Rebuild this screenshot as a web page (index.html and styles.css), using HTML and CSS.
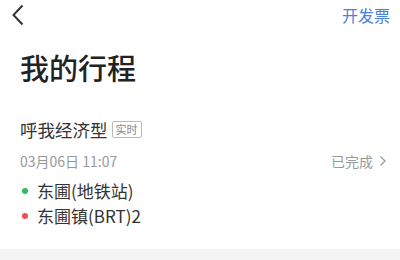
FILE: index.html
```html
<!DOCTYPE html>
<html lang="zh">
<head>
<meta charset="utf-8">
<link rel="stylesheet" href="styles.css">
</head>
<body>
<div class="page">
  <div class="nav">
    <svg class="back" width="14" height="22" viewBox="0 0 14 22"><path d="M11.5 1.5 L2.5 11 L11.5 20.5" fill="none" stroke="#333" stroke-width="2"/></svg>
    <span class="invoice">开发票</span>
  </div>
  <h1 class="title">我的行程</h1>
  <div class="card">
    <div class="type-row">
      <span class="type">呼我经济型</span>
      <span class="tag">实时</span>
    </div>
    <div class="meta-row">
      <span class="date">03月06日 11:07</span>
      <span class="status">已完成
        <svg width="8" height="12" viewBox="0 0 8 12"><path d="M1.5 1.5 L6 6 L1.5 10.5" fill="none" stroke="#999" stroke-width="1.3"/></svg>
      </span>
    </div>
    <div class="stops">
      <div class="stop"><span class="dot green"></span><span>东圃(地铁站)</span></div>
      <div class="stop"><span class="dot red"></span><span>东圃镇(BRT)2</span></div>
    </div>
  </div>
  <div class="band"></div>
</div>
</body>
</html>
```
FILE: styles.css
```css
* { box-sizing: border-box; }
html, body { margin: 0; padding: 0; background: #fff; }
body { font-family: "Noto Sans CJK SC", "Noto Sans", sans-serif; color: #333; }
.page { width: 400px; height: 260px; overflow: hidden; display: flex; flex-direction: column; }
.nav { height: 30px; display: flex; align-items: center; justify-content: space-between; padding: 0 10px 0 11px; }
.back { display: block; }
.invoice { font-size: 16px; color: #4a80e0; line-height: 30px; }
.title { margin: 17px 0 0 20px; font-size: 29px; font-weight: 500; color: #222; line-height: 40px; }
.card { padding: 0 13px 0 20px; margin-top: 30px; }
.type-row { display: flex; align-items: center; height: 24px; }
.type { font-size: 17.5px; color: #333; }
.tag { margin-left: 4px; font-size: 11px; color: #888; border: 1px solid #bbb; border-radius: 2px; line-height: 13px; padding: 1px 3px; }
.meta-row { display: flex; justify-content: space-between; align-items: center; margin-top: 9px; height: 22px; font-size: 14px; color: #999; }
.status { display: flex; align-items: center; gap: 6px; }
.stops { margin-top: 6px; }
.stop { display: flex; align-items: center; height: 25px; font-size: 17px; color: #333; }
.dot { width: 6px; height: 6px; border-radius: 50%; margin: 0 9px 0 2px; }
.green { background: #2cbe5a; }
.red { background: #f04c4c; }
.band { margin-top: auto; height: 11px; background: #f4f4f4; }
```
